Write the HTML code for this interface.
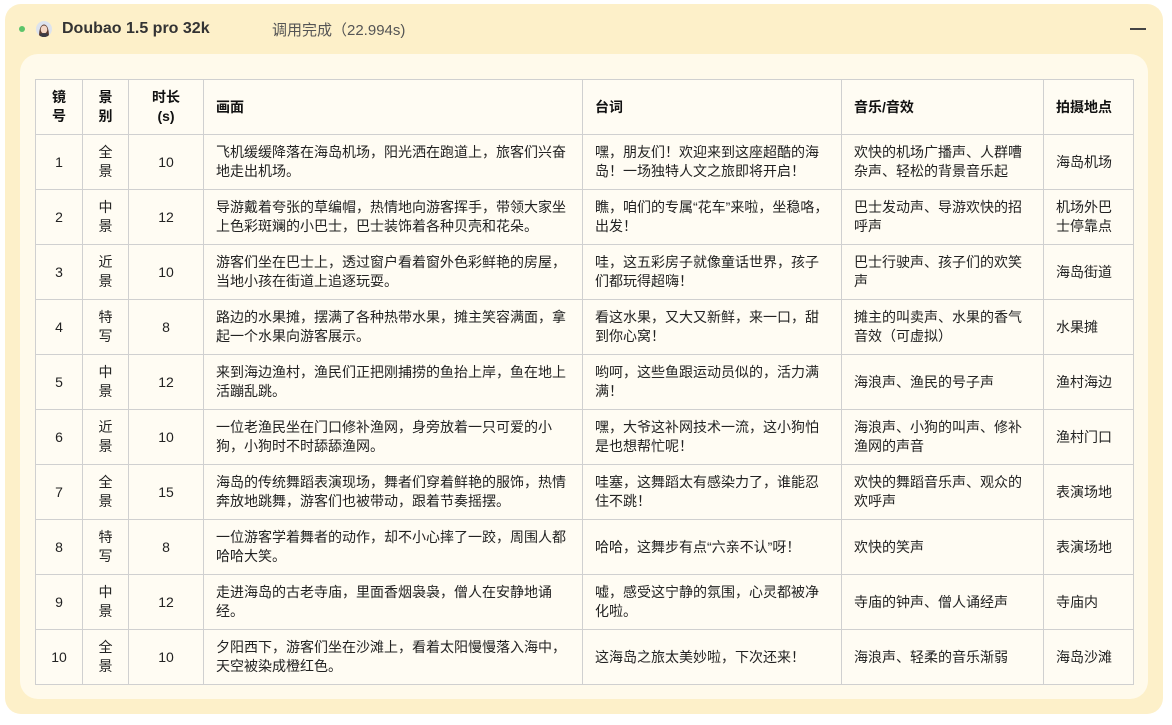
<!DOCTYPE html>
<html><head><meta charset="utf-8"><style>
*{margin:0;padding:0;box-sizing:border-box}
body{width:1172px;height:725px;background:#fff;font-family:"Liberation Sans","Noto Sans CJK SC",sans-serif;color:#222;position:relative;overflow:hidden}
.outer{position:absolute;left:5px;top:4px;width:1158px;height:710px;background:#fdf0c9;border-radius:16px}
.dot{position:absolute;left:19px;top:26px;width:6px;height:6px;border-radius:50%;background:#5cc46a}
.av{position:absolute;left:36px;top:21px;width:16px;height:16px;border-radius:50%;background:#dde3ee;overflow:hidden}
.title{position:absolute;left:62px;top:20px;font-size:16px;font-weight:bold;color:#333}
.status{position:absolute;left:272px;top:19px;font-size:15px;color:#555}
.min{position:absolute;left:1130px;top:28px;width:16px;height:2px;background:#444}
.inner{position:absolute;left:20px;top:54px;width:1128px;height:645px;background:#fffaeb;border-radius:18px}
table{position:absolute;left:35px;top:79px;border-collapse:collapse;table-layout:fixed;width:1098px}
td,th{border:1px solid #d0d0d0;height:55px;font-size:14px;line-height:19px;white-space:nowrap;vertical-align:middle;padding:0 12px;text-align:left;background:#fffcf3}
th{font-weight:bold;color:#111}
.c{text-align:center;padding:0}
</style></head><body>
<div class="outer"></div>
<div class="dot"></div>
<div class="av"><svg width="16" height="16" viewBox="0 0 16 16"><path d="M3 16 Q3 4 8 3.5 Q13 4 13 16Z" fill="#5a3a2e"/><ellipse cx="8" cy="8.5" rx="3.3" ry="4" fill="#f4d7c6"/><path d="M4 13 Q8 11 12 13 L12 16 L4 16Z" fill="#3a3a44"/></svg></div>
<div class="title">Doubao 1.5 pro 32k</div>
<div class="status">调用完成（22.994s)</div>
<div class="min"></div>
<div class="inner"></div>
<table>
<colgroup><col style="width:47px"><col style="width:46px"><col style="width:75px"><col style="width:379px"><col style="width:259px"><col style="width:202px"><col style="width:90px"></colgroup>
<tr><th class="c">镜<br>号</th><th class="c">景<br>别</th><th class="c">时长<br>(s)</th><th>画面</th><th>台词</th><th>音乐/音效</th><th>拍摄地点</th></tr>
<tr><td class="c">1</td><td class="c">全<br>景</td><td class="c">10</td><td>飞机缓缓降落在海岛机场，阳光洒在跑道上，旅客们兴奋<br>地走出机场。</td><td>嘿，朋友们！欢迎来到这座超酷的海<br>岛！一场独特人文之旅即将开启！</td><td>欢快的机场广播声、人群嘈<br>杂声、轻松的背景音乐起</td><td>海岛机场</td></tr>
<tr><td class="c">2</td><td class="c">中<br>景</td><td class="c">12</td><td>导游戴着夸张的草编帽，热情地向游客挥手，带领大家坐<br>上色彩斑斓的小巴士，巴士装饰着各种贝壳和花朵。</td><td>瞧，咱们的专属“花车”来啦，坐稳咯，<br>出发！</td><td>巴士发动声、导游欢快的招<br>呼声</td><td>机场外巴<br>士停靠点</td></tr>
<tr><td class="c">3</td><td class="c">近<br>景</td><td class="c">10</td><td>游客们坐在巴士上，透过窗户看着窗外色彩鲜艳的房屋，<br>当地小孩在街道上追逐玩耍。</td><td>哇，这五彩房子就像童话世界，孩子<br>们都玩得超嗨！</td><td>巴士行驶声、孩子们的欢笑<br>声</td><td>海岛街道</td></tr>
<tr><td class="c">4</td><td class="c">特<br>写</td><td class="c">8</td><td>路边的水果摊，摆满了各种热带水果，摊主笑容满面，拿<br>起一个水果向游客展示。</td><td>看这水果，又大又新鲜，来一口，甜<br>到你心窝！</td><td>摊主的叫卖声、水果的香气<br>音效（可虚拟）</td><td>水果摊</td></tr>
<tr><td class="c">5</td><td class="c">中<br>景</td><td class="c">12</td><td>来到海边渔村，渔民们正把刚捕捞的鱼抬上岸，鱼在地上<br>活蹦乱跳。</td><td>哟呵，这些鱼跟运动员似的，活力满<br>满！</td><td>海浪声、渔民的号子声</td><td>渔村海边</td></tr>
<tr><td class="c">6</td><td class="c">近<br>景</td><td class="c">10</td><td>一位老渔民坐在门口修补渔网，身旁放着一只可爱的小<br>狗，小狗时不时舔舔渔网。</td><td>嘿，大爷这补网技术一流，这小狗怕<br>是也想帮忙呢！</td><td>海浪声、小狗的叫声、修补<br>渔网的声音</td><td>渔村门口</td></tr>
<tr><td class="c">7</td><td class="c">全<br>景</td><td class="c">15</td><td>海岛的传统舞蹈表演现场，舞者们穿着鲜艳的服饰，热情<br>奔放地跳舞，游客们也被带动，跟着节奏摇摆。</td><td>哇塞，这舞蹈太有感染力了，谁能忍<br>住不跳！</td><td>欢快的舞蹈音乐声、观众的<br>欢呼声</td><td>表演场地</td></tr>
<tr><td class="c">8</td><td class="c">特<br>写</td><td class="c">8</td><td>一位游客学着舞者的动作，却不小心摔了一跤，周围人都<br>哈哈大笑。</td><td>哈哈，这舞步有点“六亲不认”呀！</td><td>欢快的笑声</td><td>表演场地</td></tr>
<tr><td class="c">9</td><td class="c">中<br>景</td><td class="c">12</td><td>走进海岛的古老寺庙，里面香烟袅袅，僧人在安静地诵<br>经。</td><td>嘘，感受这宁静的氛围，心灵都被净<br>化啦。</td><td>寺庙的钟声、僧人诵经声</td><td>寺庙内</td></tr>
<tr><td class="c">10</td><td class="c">全<br>景</td><td class="c">10</td><td>夕阳西下，游客们坐在沙滩上，看着太阳慢慢落入海中，<br>天空被染成橙红色。</td><td>这海岛之旅太美妙啦，下次还来！</td><td>海浪声、轻柔的音乐渐弱</td><td>海岛沙滩</td></tr>
</table>
</body></html>
